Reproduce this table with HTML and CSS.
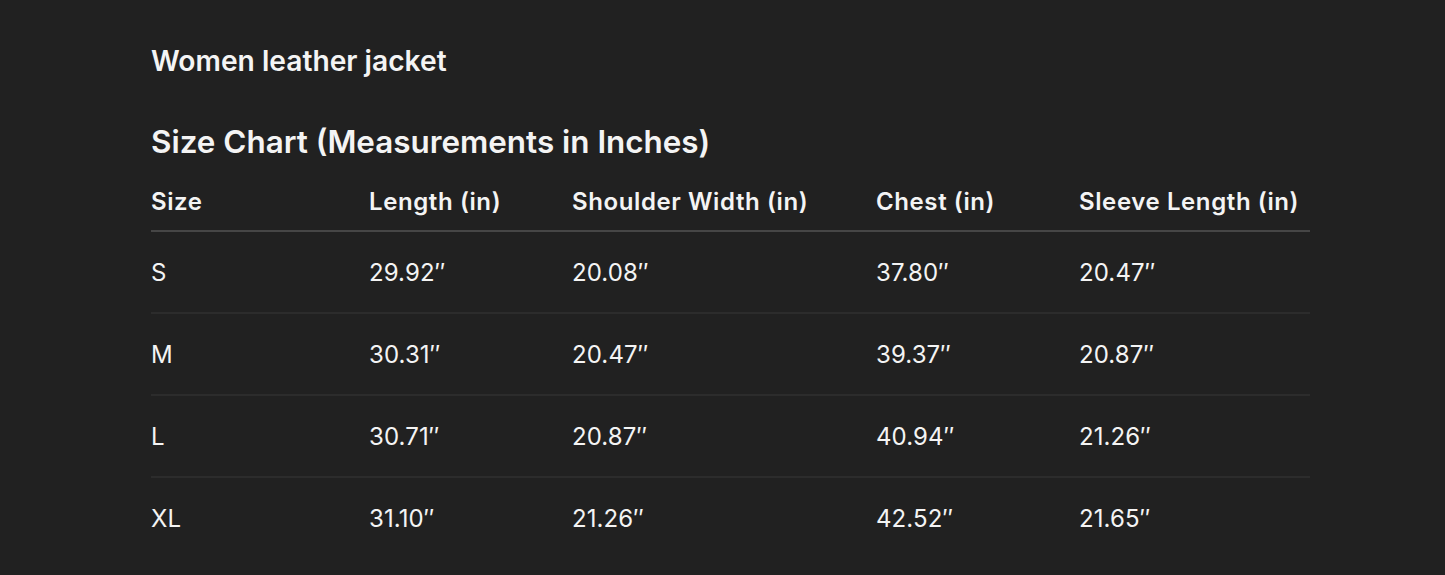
FILE: index.html
```html
<!DOCTYPE html>
<html lang="en">
<head>
<meta charset="utf-8">
<title>Women leather jacket</title>
<link rel="stylesheet" href="styles.css">
</head>
<body>
<main class="page">
  <h1 class="title">Women leather jacket</h1>
  <h2 class="chart-title">Size Chart (Measurements in Inches)</h2>
  <div class="chart">
    <div class="row head">
      <div class="cell">Size</div>
      <div class="cell">Length (in)</div>
      <div class="cell">Shoulder Width (in)</div>
      <div class="cell">Chest (in)</div>
      <div class="cell">Sleeve Length (in)</div>
    </div>
    <div class="row">
      <div class="cell">S</div>
      <div class="cell">29.92″</div>
      <div class="cell">20.08″</div>
      <div class="cell">37.80″</div>
      <div class="cell">20.47″</div>
    </div>
    <div class="row">
      <div class="cell">M</div>
      <div class="cell">30.31″</div>
      <div class="cell">20.47″</div>
      <div class="cell">39.37″</div>
      <div class="cell">20.87″</div>
    </div>
    <div class="row">
      <div class="cell">L</div>
      <div class="cell">30.71″</div>
      <div class="cell">20.87″</div>
      <div class="cell">40.94″</div>
      <div class="cell">21.26″</div>
    </div>
    <div class="row last">
      <div class="cell">XL</div>
      <div class="cell">31.10″</div>
      <div class="cell">21.26″</div>
      <div class="cell">42.52″</div>
      <div class="cell">21.65″</div>
    </div>
  </div>
</main>
</body>
</html>
```

FILE: styles.css
```css
html, body {
  margin: 0;
  padding: 0;
  background: #212121;
  color: #f4f4f4;
  font-family: Inter, "Noto Sans", "Liberation Sans", sans-serif;
}

.page {
  padding: 42px 0 0 151px;
  width: 1159px;
}

.title {
  margin: 0;
  font-size: 28.2px;
  font-weight: 600;
  line-height: 38px;
}

.chart-title {
  margin: 40px 0 0;
  font-size: 31.4px;
  font-weight: 600;
  line-height: 44px;
}

.chart {
  margin-top: 8px;
}

.row {
  display: grid;
  grid-template-columns: 218px 203px 304px 203px 231px;
  align-items: center;
  height: 80px;
  border-bottom: 2px solid #2c2c2c;
  font-size: 24px;
  font-weight: 400;
  letter-spacing: 0.1px;
}

.row.head {
  height: 58px;
  border-bottom-color: #464646;
  font-size: 24px;
  font-weight: 600;
  letter-spacing: 0.6px;
}

.row.last {
  border-bottom: none;
}
```
